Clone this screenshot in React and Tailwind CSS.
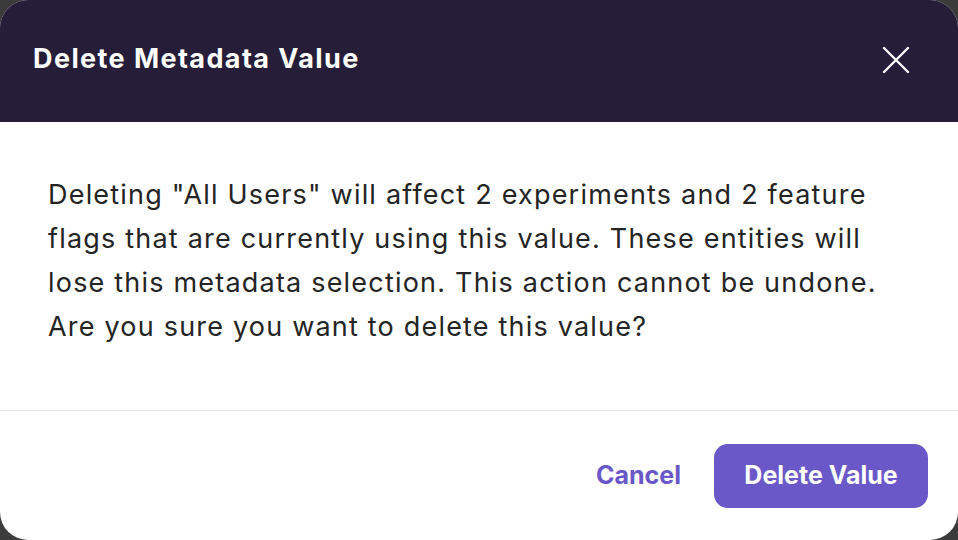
import React from 'react';

const CloseIcon = () => (
  <svg width="28" height="28" viewBox="0 0 28 28" fill="none" stroke="currentColor" strokeWidth="2.4" strokeLinecap="round">
    <path d="M2 2L26 26M26 2L2 26" />
  </svg>
);

const App = () => {
  return (
    <div className="h-[540px] w-[958px] bg-[#3b3b3b] font-['Inter','Noto_Sans',sans-serif]">
      <div className="flex h-full w-full flex-col overflow-hidden rounded-[28px] bg-white">
        {/* Header */}
        <div className="flex h-[122px] shrink-0 items-center justify-between bg-[#261d38] pb-[3px] pl-[33px] pr-[48px]">
          <h2 className="text-[27px] font-bold tracking-[1.4px] text-white">Delete Metadata Value</h2>
          <button className="text-white">
            <CloseIcon />
          </button>
        </div>

        {/* Body */}
        <div className="flex-1 px-[48px] pt-[51px]">
          <p className="text-[27px] leading-[44px] tracking-[1.2px] text-[#242424]">
            Deleting "All Users" will affect 2 experiments and 2 feature
            <br />
            flags that are currently using this value. These entities will
            <br />
            lose this metadata selection. This action cannot be undone.
            <br />
            Are you sure you want to delete this value?
          </p>
        </div>

        {/* Footer */}
        <div className="flex h-[130px] shrink-0 items-center justify-end gap-[33px] border-t border-[#e8e6e2] pr-[30px]">
          <button className="text-[25px] font-bold text-[#6a57c8]">Cancel</button>
          <button className="h-[64px] w-[214px] rounded-[14px] bg-[#6a57c8] text-[25px] font-bold text-white">
            Delete Value
          </button>
        </div>
      </div>
    </div>
  );
};

export default App;
